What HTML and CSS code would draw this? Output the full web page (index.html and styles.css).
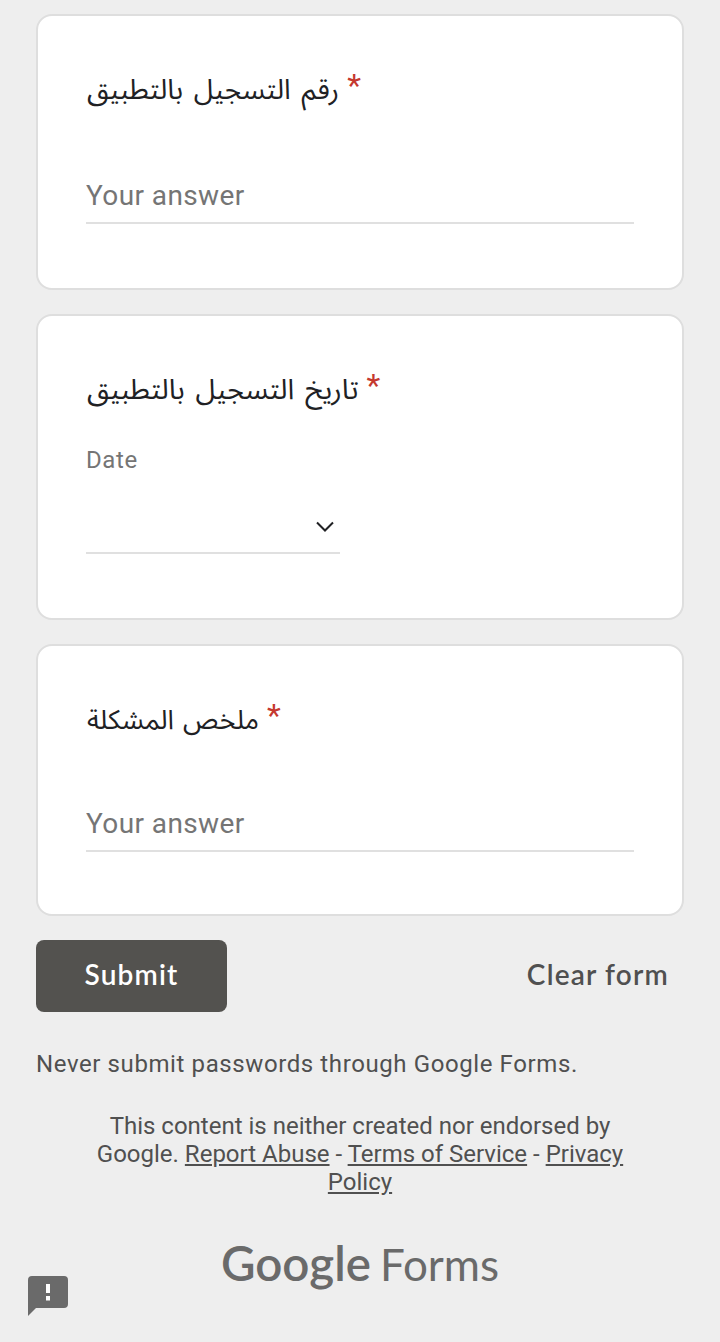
FILE: index.html
```html
<!DOCTYPE html>
<html lang="en">
  <head>
    <meta charset="UTF-8">
    <meta name="viewport" content="width=device-width, initial-scale=1.0">
    <title>Google Forms</title>
    <link rel="stylesheet" href="styles.css">
  </head>
  <body>
    <form class="form">
      <div class="card">
        <label class="question" for="number"><span class="arabic" lang="ar">رقم التسجيل بالتطبيق</span><span class="required">*</span></label>
        <input class="answer" type="text" id="number" placeholder="Your answer">
      </div>

      <div class="card card-date">
        <div class="question"><span class="arabic" lang="ar">تاريخ التسجيل بالتطبيق</span><span class="required">*</span></div>
        <div class="date-label">Date</div>
        <div class="date-field">
          <svg class="chevron" width="20" height="12" viewBox="0 0 20 12">
            <path d="M2 1.5 L10 9.5 L18 1.5" fill="none" stroke="#202124" stroke-width="2"/>
          </svg>
        </div>
      </div>

      <div class="card card-summary">
        <label class="question" for="summary"><span class="arabic" lang="ar">ملخص المشكلة</span><span class="required">*</span></label>
        <input class="answer" type="text" id="summary" placeholder="Your answer">
      </div>

      <div class="actions">
        <button class="submit" type="button">Submit</button>
        <button class="clear" type="button">Clear form</button>
      </div>
    </form>

    <p class="warning">Never submit passwords through Google Forms.</p>
    <p class="disclaimer">
      This content is neither created nor endorsed by Google.
      <a href="#">Report Abuse</a> - <a href="#">Terms of Service</a> - <a href="#">Privacy Policy</a>
    </p>

    <div class="logo"><span class="logo-google">Google</span><span class="logo-forms">Forms</span></div>

    <svg class="report" width="40" height="40" viewBox="0 0 40 40">
      <path d="M4 0H36Q40 0 40 4V28Q40 32 36 32H8L0 40V4Q0 0 4 0Z" fill="#6a6a6a"/>
      <path d="M18 8H22V17H18ZM18 20H22V24.5H18Z" fill="#fff"/>
    </svg>
  </body>
</html>
```

FILE: styles.css
```css
* {
  box-sizing: border-box;
}
body {
  margin: 0;
  padding: 14px 36px 0;
  height: 1342px;
  overflow: hidden;
  background-color: #eee;
  font-family: Roboto, "Liberation Sans", sans-serif;
  color: #505050;
}
.form {
  display: flex;
  flex-direction: column;
  gap: 24px;
}
.card {
  height: 276px;
  padding: 50px 48px 0;
  background-color: white;
  border: 2px solid #dedede;
  border-radius: 16px;
}
.card-date {
  height: 306px;
}
.card-summary {
  height: 272px;
}
.question {
  display: flex;
  align-items: center;
  gap: 8px;
  height: 48px;
  padding-left: 1px;
  color: #202124;
  font-size: 28px;
}
.arabic {
  font-family: "Noto Sans Arabic", "DejaVu Sans", sans-serif;
  font-size: 28px;
  word-spacing: 3.5px;
  white-space: nowrap;
}
.card-date .arabic {
  font-size: 28.5px;
}
.card-summary .arabic {
  font-size: 27px;
  word-spacing: 2px;
}
.required {
  padding-bottom: 10px;
  color: #c5392f;
  font-size: 32px;
}
.answer {
  display: block;
  width: 548px;
  height: 60px;
  margin-top: 50px;
  padding: 4px 0 0;
  border: none;
  border-bottom: 2px solid #e0e0e0;
  outline: none;
  font-family: inherit;
  font-size: 28px;
  letter-spacing: 0.4px;
}
.answer::placeholder {
  color: #757575;
}
.card-summary .answer {
  margin-top: 48px;
}
.date-label {
  margin-top: 30px;
  height: 32px;
  line-height: 32px;
  color: #757575;
  font-size: 24px;
  letter-spacing: 0.6px;
}
.date-field {
  display: flex;
  justify-content: flex-end;
  align-items: center;
  width: 254px;
  height: 78px;
  padding: 25px 5px 0 0;
  border-bottom: 2px solid #e0e0e0;
}
.actions {
  display: flex;
  justify-content: space-between;
}
button {
  height: 72px;
  border: none;
  font-family: Lato, sans-serif;
  font-size: 28px;
  font-weight: 600;
  letter-spacing: 1.2px;
  padding: 0 0 4px;
}
.submit {
  width: 191px;
  border-radius: 8px;
  background-color: #53524f;
  color: white;
}
.clear {
  padding-right: 15px;
  background: none;
  color: #505050;
}
.warning {
  margin: 36px 0 0;
  font-size: 24px;
  line-height: 32px;
  letter-spacing: 0.6px;
}
.disclaimer {
  width: 560px;
  margin: 32px auto 0;
  font-size: 24px;
  line-height: 28px;
  text-align: center;
}
.disclaimer a {
  color: inherit;
}
.logo {
  display: flex;
  justify-content: center;
  align-items: baseline;
  gap: 9px;
  margin-top: 37px;
  color: #6a6a6a;
  font-family: Lato, sans-serif;
  line-height: 60px;
}
.logo-google {
  font-size: 47.5px;
  font-weight: 600;
}
.logo-forms {
  font-size: 44px;
  font-weight: 400;
}
/* floats over the page corner */
.report {
  position: absolute;
  left: 28px;
  top: 1276px;
}
```
